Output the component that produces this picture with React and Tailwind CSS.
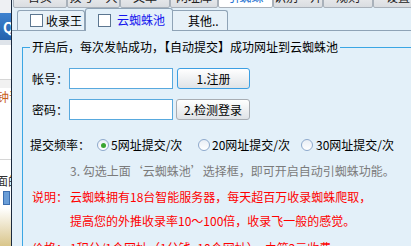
import React from "react";

const topTabs = [
    { label: '首页', w: 'w-[54px]' },
    { label: '拨号·大', w: 'w-[53px]' },
    { label: '文章', w: 'w-[50px]' },
    { label: '网址库', w: 'w-[48px]' },
    { label: '引蜘蛛', w: 'w-[55px]', active: true },
    { label: '识别·开', w: 'w-[50px]' },
    { label: '规则', w: 'w-[50px]' },
    { label: '设置', w: 'w-[50px]' },
]

const CheckBox = () => (
    <span className="w-[13px] h-[13px] border border-[#5c7690] bg-white shrink-0" />
)

const Radio = ({ checked }) => (
    <span className="w-[12px] h-[12px] rounded-full border border-[#8ea9cc] bg-gradient-to-b from-[#e9eef5] to-white flex items-center justify-center shrink-0">
        {checked && <span className="w-[5px] h-[5px] rounded-full bg-[#3aa52f]" />}
    </span>
)

const App = () => {
    return (
        <div lang="zh-CN" className="w-[411px] h-[246px] overflow-hidden flex text-[12px] leading-[14px] text-black" style={{ fontFamily: '"Noto Sans CJK SC", "Noto Sans", sans-serif' }}>
            {/* window behind */}
            <div className="w-[11px] shrink-0 flex flex-col bg-white overflow-hidden">
                <div className="h-[13px] bg-[#eef0f3]" />
                <div className="h-[27px] bg-gradient-to-b from-[#3f82cf] to-[#2262ad] flex items-center pl-[3px] text-white font-bold text-[14px]">Q</div>
                <div className="h-[5px] bg-[#dfe4ea]" />
                <div className="h-[35px] border-b border-[#d6d6d6]" />
                <div className="h-[8px] bg-[#f1f1f1]" />
                <div className="h-[18px] flex items-center text-[#c8611b] whitespace-nowrap -ml-[3px]">钟晋</div>
                <div className="h-[54px] border-b border-[#d6d6d6]" />
                <div className="h-[28px] flex items-end text-[#333] whitespace-nowrap -ml-[4px]">面的</div>
                <div className="h-[20px] flex items-center pl-[3px]">
                    <span className="w-[7px] h-[14px] bg-[#6a9ed8] border border-[#3d6fb0]" />
                </div>
                <div className="flex-1 bg-gradient-to-b from-white to-[#d9c58a]" />
            </div>
            <div className="w-px shrink-0 bg-[#1b2a3e]" />

            {/* main panel */}
            <div className="flex-1 bg-[#e3f0f9] flex flex-col">
                <div className="h-[8px] flex pl-px">
                    {topTabs.map(t => (
                        <div key={t.label} className={`${t.w} shrink-0 h-[22px] -mt-[14px] border border-[#a9b1ba] rounded-[2px] flex items-center justify-center whitespace-nowrap ${t.active ? 'bg-white text-[#1a6fd0]' : 'bg-gradient-to-b from-[#f7f7f7] to-[#dadde1] text-[#222]'}`}>
                            {t.label}
                        </div>
                    ))}
                </div>

                <div className="h-[25px] flex items-end pl-[5px] border-b border-[#8fa3b6]">
                    <div className="w-[68px] h-[20px] border border-b-0 border-[#8fa3b6] rounded-t-[3px] bg-[#e7f1f8] flex items-center pl-[12px] gap-[3px]">
                        <CheckBox />
                        <span>收录王</span>
                    </div>
                    <div className="w-[88px] h-[23px] -mb-px border border-b-0 border-[#8fa3b6] rounded-t-[3px] bg-[#e3f0f9] flex items-center pl-[12px] gap-[6px]">
                        <CheckBox />
                        <span className="text-[#1515ee]">云蜘蛛池</span>
                    </div>
                    <div className="w-[55px] h-[20px] border border-b-0 border-l-0 border-[#8fa3b6] rounded-tr-[3px] bg-[#e7f1f8] flex items-center pl-[15px] whitespace-nowrap">
                        其他..
                    </div>
                </div>

                <fieldset className="mt-[9px] ml-[10px] border-t border-l border-[#3ba6e4] pl-[7px]">
                    <legend className="px-[2px] whitespace-nowrap">开启后，每次发帖成功，【自动提交】成功网址到云蜘蛛池</legend>

                    <div className="mt-[14px] h-[21px] flex items-center pl-[2px]">
                        <span className="w-[37px]">帐号：</span>
                        <div className="w-[104px] h-[21px] bg-white border border-[#58a9de]" />
                        <button className="ml-[4px] w-[73px] h-[21px] rounded-[3px] border border-[#3c9fe3] bg-gradient-to-b from-white to-[#dfe3e7] flex items-center justify-center">1.注册</button>
                    </div>
                    <div className="mt-[10px] h-[21px] flex items-center pl-[2px]">
                        <span className="w-[37px]">密码：</span>
                        <div className="w-[104px] h-[21px] bg-white border border-[#58a9de]" />
                        <button className="ml-[3px] w-[74px] h-[21px] rounded-[3px] border border-[#a8adb3] bg-gradient-to-b from-white to-[#dfe3e7] flex items-center justify-center">2.检测登录</button>
                    </div>

                    <div className="mt-[18px] h-[14px] flex items-center whitespace-nowrap">
                        <span className="w-[67px]">提交频率：</span>
                        <div className="w-[101px] flex items-center gap-[2px]"><Radio checked /><span>5网址提交/次</span></div>
                        <div className="w-[103px] flex items-center gap-[2px]"><Radio /><span>20网址提交/次</span></div>
                        <div className="flex items-center gap-[3px]"><Radio /><span>30网址提交/次</span></div>
                    </div>

                    <div className="mt-[12px] pl-[40px] text-[#7b7b7b] whitespace-nowrap">3. 勾选上面‘云蜘蛛池’选择框，即可开启自动引蜘蛛功能。</div>

                    <div className="mt-[12px] flex text-[#ff0000] whitespace-nowrap pl-[2px]">
                        <span className="w-[38px]">说明：</span>
                        <div className="flex flex-col gap-[10px]">
                            <span>云蜘蛛拥有18台智能服务器，每天超百万收录蜘蛛爬取，</span>
                            <span>提高您的外推收录率10～100倍，收录飞一般的感觉。</span>
                        </div>
                    </div>
                    <div className="mt-[13px] flex text-[#ff0000] whitespace-nowrap pl-[2px]">
                        <span className="w-[38px]">价格：</span>
                        <span>1积分/1个网址（1分钱=10个网址），由第2元收费</span>
                    </div>
                </fieldset>
            </div>
        </div>
    )
}

export default App
